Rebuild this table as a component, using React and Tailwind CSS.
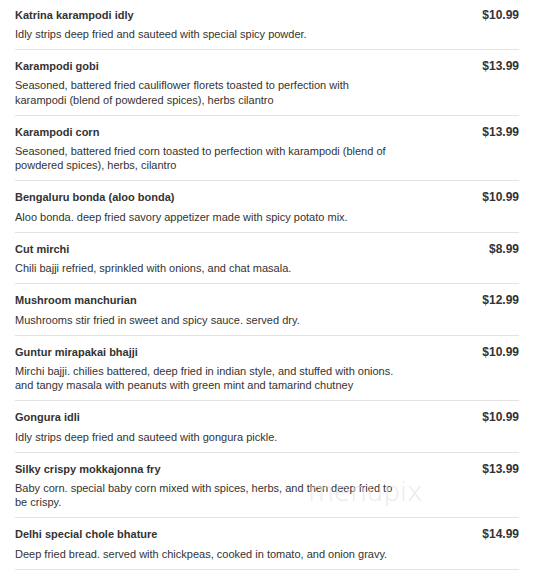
const items = [
  {
    name: "Katrina karampodi idly",
    price: "$10.99",
    desc: ["Idly strips deep fried and sauteed with special spicy powder."],
  },
  {
    name: "Karampodi gobi",
    price: "$13.99",
    desc: [
      "Seasoned, battered fried cauliflower florets toasted to perfection with",
      "karampodi (blend of powdered spices), herbs cilantro",
    ],
  },
  {
    name: "Karampodi corn",
    price: "$13.99",
    desc: [
      "Seasoned, battered fried corn toasted to perfection with karampodi (blend of",
      "powdered spices), herbs, cilantro",
    ],
  },
  {
    name: "Bengaluru bonda (aloo bonda)",
    price: "$10.99",
    desc: ["Aloo bonda. deep fried savory appetizer made with spicy potato mix."],
  },
  {
    name: "Cut mirchi",
    price: "$8.99",
    desc: ["Chili bajji refried, sprinkled with onions, and chat masala."],
  },
  {
    name: "Mushroom manchurian",
    price: "$12.99",
    desc: ["Mushrooms stir fried in sweet and spicy sauce. served dry."],
  },
  {
    name: "Guntur mirapakai bhajji",
    price: "$10.99",
    desc: [
      "Mirchi bajji. chilies battered, deep fried in indian style, and stuffed with onions.",
      "and tangy masala with peanuts with green mint and tamarind chutney",
    ],
  },
  {
    name: "Gongura idli",
    price: "$10.99",
    desc: ["Idly strips deep fried and sauteed with gongura pickle."],
  },
  {
    name: "Silky crispy mokkajonna fry",
    price: "$13.99",
    desc: [
      "Baby corn. special baby corn mixed with spices, herbs, and then deep fried to",
      "be crispy.",
    ],
  },
  {
    name: "Delhi special chole bhature",
    price: "$14.99",
    desc: ["Deep fried bread. served with chickpeas, cooked in tomato, and onion gravy."],
  },
];

export default function App() {
  return (
    <div className="relative min-h-screen bg-white text-[#333] font-['Liberation_Sans',Arial,sans-serif] overflow-hidden">
      <div className="w-[504px] ml-[15px] -mt-[1.5px]">
        {items.map((item, i) => (
          <div key={i} className="border-b border-[#e3e3e3] pt-[9px] pb-[7.9px]">
            <div className="flex justify-between items-center h-[14px]">
              <span className="text-[11px] font-bold leading-[14px]">{item.name}</span>
              <span className="text-[12px] font-bold leading-[14px]">{item.price}</span>
            </div>
            <div className="mt-[5.5px] text-[11px] leading-[14.1px]">
              {item.desc.map((line, j) => (
                <div key={j}>{line}</div>
              ))}
            </div>
          </div>
        ))}
      </div>

      {/* watermark */}
      <div className="absolute left-[308px] top-[472px] text-[27px] font-light text-[#e2e2e2] opacity-70 pointer-events-none font-['DejaVu_Sans',sans-serif] tracking-[-0.5px]">
        menupix
      </div>
    </div>
  );
}
